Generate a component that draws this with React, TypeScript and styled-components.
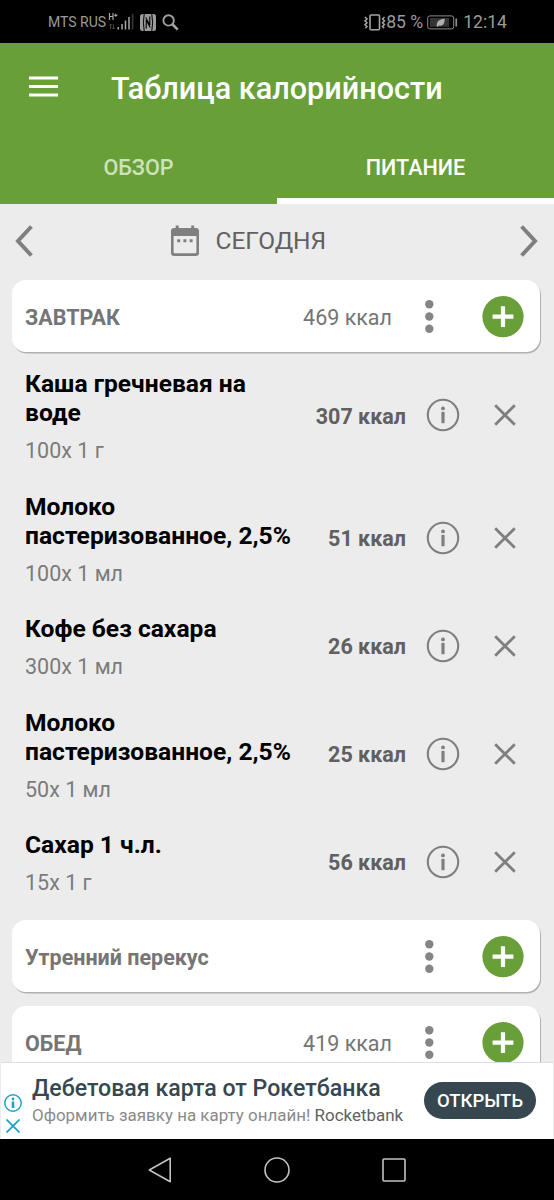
import React from 'react';
import styled, { createGlobalStyle } from 'styled-components';

const GREEN = '#689f38';
const GREY = '#7f7f7f';

const GlobalStyle = createGlobalStyle`
  * { box-sizing: border-box; }
  body { margin: 0; background: #ececec; font-family: Roboto, sans-serif; }
  svg { display: block; flex: none; }
  button { border: 0; padding: 0; background: none; font: inherit; color: inherit; }
`;

const Screen = styled.div`
  display: flex;
  flex-direction: column;
  width: 554px;
  height: 1200px;
  overflow: hidden;
  background: #ececec;
`;

const StatusBar = styled.div`
  flex: none;
  display: flex;
  justify-content: space-between;
  align-items: center;
  height: 43px;
  padding: 1px 47px 0 48px;
  background: #000;
  color: #9b9b9b;
`;

const StatusGroup = styled.div`
  display: flex;
  align-items: center;
`;

const StatusIcons = styled(StatusGroup)`
  gap: 6px;
`;

const Carrier = styled.span`
  width: 60px;
  font-size: 14px;
  line-height: 20px;
  white-space: nowrap;
`;

const StatusText = styled.span`
  font-size: 17.6px;
  line-height: 22px;
  white-space: nowrap;
`;

const BatterySlot = styled.span`
  margin: 0 5px 0 4px;
`;

const Header = styled.header`
  flex: none;
  height: 161px;
  background: ${GREEN};
  color: #fff;
`;

const TitleRow = styled.div`
  display: flex;
  align-items: center;
  gap: 53px;
  height: 88px;
  padding-left: 28px;
`;

const Title = styled.h1`
  margin: 0;
  padding-top: 3px;
  font-size: 30.6px;
  font-weight: 500;
  line-height: 36px;
  white-space: nowrap;
`;

const Tabs = styled.div`
  display: flex;
  height: 73px;
`;

const Tab = styled.button<{ $active?: boolean }>`
  flex: 1;
  padding-top: 5px;
  border-bottom: 6px solid ${(p) => (p.$active ? '#fff' : 'transparent')};
  color: ${(p) => (p.$active ? '#fff' : '#cfe3b8')};
  font-size: 21.6px;
  font-weight: 500;
`;

const DateBar = styled.div`
  flex: none;
  display: flex;
  align-items: center;
  justify-content: space-between;
  height: 76px;
  padding: 0 16px 3px 15px;
`;

const DateLabel = styled.div`
  flex: 1;
  display: flex;
  align-items: center;
  gap: 17px;
  padding-left: 137.5px;
  color: #616161;
  font-size: 24.5px;
`;

const Diary = styled.main`
  flex: 1;
  min-height: 0;
  overflow: hidden;
  padding: 0 14px 0 12px;
`;

const MealCard = styled.section`
  display: flex;
  align-items: center;
  height: 72px;
  margin-bottom: 14px;
  padding: 1px 16px 0 13px;
  border-radius: 14px;
  background: #fff;
  box-shadow: 1px 1.5px 0.5px #b0b0b0;
`;

const MealName = styled.h2`
  flex: 1;
  margin: 0;
  padding-top: 2px;
  color: #757575;
  font-size: 21.5px;
  font-weight: 700;
  line-height: 26px;
`;

const MealTotal = styled.span`
  margin-right: 32px;
  padding-top: 2px;
  color: #757575;
  font-size: 21.5px;
  line-height: 26px;
`;

const Dots = styled.button`
  display: flex;
  margin-right: 48px;
`;

const FoodList = styled.div`
  height: 554px;
`;

const BreakfastGroup = styled.div`
  ${MealCard} { margin-bottom: 1.8px; }
  ${FoodList} { margin-bottom: 12.6px; }
`;

const FoodRow = styled.div`
  display: flex;
  align-items: center;
  padding: 0 24px 0 13px;
`;

const FoodText = styled.div`
  flex: none;
  width: 280px;
  padding: 15.2px 0 12.1px;
`;

const FoodName = styled.h3`
  margin: 0 0 10px;
  color: #000;
  font-size: 24.6px;
  font-weight: 700;
  line-height: 29.5px;
  white-space: pre-line;
`;

const Portion = styled.div`
  color: #7b7b7b;
  font-size: 21.5px;
  line-height: 26.4px;
`;

const FoodKcal = styled.span`
  flex: 1;
  padding-top: 2px;
  color: #606060;
  font-size: 21.5px;
  font-weight: 700;
  text-align: right;
  white-space: nowrap;
`;

const InfoButton = styled.button`
  margin: 0 34px 0 20px;
`;

const AdBanner = styled.aside`
  flex: none;
  display: flex;
  height: 77px;
  margin: 0 1px;
  border-top: 1px solid #dcdfe1;
  background: #fff;
`;

const AdMarks = styled.div`
  display: flex;
  flex-direction: column;
  align-items: center;
  gap: 7px;
  width: 24px;
  padding-top: 31px;
`;

const AdCopy = styled.div`
  flex: 1;
  padding: 12px 0 0 7px;
  white-space: nowrap;
`;

const AdTitle = styled.div`
  color: #37474f;
  font-size: 23.15px;
  font-weight: 500;
  line-height: 28px;
`;

const AdText = styled.div`
  color: #8a8a8a;
  font-size: 16.95px;
  line-height: 24px;
`;

const AdBrand = styled.span`
  color: #616161;
`;

const AdButton = styled.button`
  flex: none;
  width: 112px;
  height: 37px;
  margin: 19px 17px 0 0;
  border-radius: 19px;
  background: #37474f;
  color: #fff;
  font-size: 18.5px;
  font-weight: 500;
`;

const NavBar = styled.nav`
  flex: none;
  display: flex;
  justify-content: center;
  align-items: center;
  gap: 92px;
  height: 61px;
  background: #000;
`;

const Signal = () => (
  <svg width="26" height="18" viewBox="0 0 26 18" fill="none">
    <path d="M1.5 0v7M5 0v7M1.5 3.5H5M6.3 2.3h3M7.8 .8v3" stroke="#a8a8a8" strokeWidth="1.2" />
    <path d="M2.6 16v-5M1.4 12.3l1.2-1.3 1.2 1.3M5.4 11v5M4.2 14.7l1.2 1.3 1.2-1.3" stroke="#505050" strokeWidth=".9" />
    <path d="M10.3 14v2.5M14 11v5.5M17.5 7.5v9M21 4v12.5" stroke="#a8a8a8" strokeWidth="1.5" />
    <path d="M24.6 1v15.5" stroke="#383838" strokeWidth="1.6" />
  </svg>
);

const NfcIcon = () => (
  <svg width="16" height="17" viewBox="0 0 16 17">
    <rect width="16" height="17" rx="2.5" fill="#9b9b9b" />
    <path d="M4.2 0Q2.6 8.5 4.2 17M11.8 0q1.6 8.5 0 17" fill="none" stroke="#000" strokeWidth="1" />
    <path d="M6.2 14.5V6l4 7.5M9.8 2.5V11l-4-7.5" fill="none" stroke="#000" strokeWidth="1.1" />
  </svg>
);

const SearchIcon = () => (
  <svg width="17" height="17" viewBox="0 0 17 17" fill="none" stroke="#a0a0a0">
    <circle cx="6.6" cy="6.4" r="5.2" strokeWidth="1.9" />
    <path d="M10.2 10l5.5 5.7" strokeWidth="2.6" />
  </svg>
);

const VibrateIcon = () => (
  <svg width="22" height="17" viewBox="0 0 22 17" fill="none" stroke="#a3a3a3" strokeWidth="1.5">
    <rect x="6" y="1" width="9.5" height="14.8" rx="1" strokeWidth="1.6" />
    <path d="M1 3l2 1.9-2 1.9 2 1.9-2 1.9 2 1.9-1.6 1.6M20.5 3l-2 1.9 2 1.9-2 1.9 2 1.9-2 1.9 1.6 1.6" />
  </svg>
);

const BatteryIcon = () => (
  <svg width="31" height="15" viewBox="0 0 31 15">
    <rect x=".7" y=".9" width="26" height="13" rx="2.2" fill="none" stroke="#8c8c8c" strokeWidth="1" />
    <rect x="3" y="3" width="19" height="8.8" fill="#343434" />
    <path d="M9.8 11.5c-.6-4.5 1.8-7.2 8-7.7-.3 5.2-2.2 7.8-6 6.7l-1.2 1.3z" fill="#b0b0b0" />
    <rect x="28.4" y="3.5" width="1.7" height="8" fill="#8c8c8c" />
  </svg>
);

const CalendarIcon = () => (
  <svg width="28" height="32" viewBox="0 0 28 32" fill={GREY}>
    <path fillRule="evenodd" d="M3 3h22a3 3 0 0 1 3 3v22a3 3 0 0 1-3 3H3a3 3 0 0 1-3-3V6a3 3 0 0 1 3-3zM2.6 11v16.2c0 .7.4 1.1 1.1 1.1h20.6c.7 0 1.1-.4 1.1-1.1V11z" />
    <path d="M4.7.4h3v4h-3zM20.2.4h3v4h-3zM6.2 14.2h3v3h-3zM12.4 14.2h3v3h-3zM18.6 14.2h3v3h-3z" />
  </svg>
);

const Chevron = ({ right }: { right?: boolean }) => (
  <svg width="18" height="32" viewBox="0 0 18 32" fill="none" stroke={GREY} strokeWidth="4">
    <path d={right ? 'M1.6 1.5L15 16 1.6 30.5' : 'M16.4 1.5L3 16l13.4 14.5'} />
  </svg>
);

const DotsIcon = () => (
  <svg width="10" height="34" viewBox="0 0 10 34" fill="#858585">
    <circle cx="5.3" cy="4.2" r="4.2" />
    <circle cx="5.3" cy="16.5" r="4.2" />
    <circle cx="5.3" cy="28.8" r="4.2" />
  </svg>
);

const AddIcon = () => (
  <svg width="42" height="42" viewBox="0 0 42 42">
    <circle cx="21" cy="20.6" r="20.6" fill={GREEN} />
    <path d="M10.6 20.6h20.8M21 10.2V31" stroke="#fff" strokeWidth="4.2" />
  </svg>
);

const InfoIcon = () => (
  <svg width="34" height="34" viewBox="0 0 34 34">
    <circle cx="17" cy="17" r="15.2" fill="none" stroke={GREY} strokeWidth="2.1" />
    <circle cx="17" cy="10.4" r="1.9" fill={GREY} />
    <rect x="15.4" y="13.9" width="3.2" height="11.3" fill={GREY} />
  </svg>
);

const RemoveIcon = () => (
  <svg width="22" height="22" viewBox="0 0 22 22" stroke={GREY} strokeWidth="2.8">
    <path d="M1.2 1.2l19.6 19.6M20.8 1.2L1.2 20.8" />
  </svg>
);

const Meal = ({ name, total }: { name: string; total?: string }) => (
  <MealCard>
    <MealName>{name}</MealName>
    {total && <MealTotal>{total}</MealTotal>}
    <Dots aria-label="Меню"><DotsIcon /></Dots>
    <button aria-label="Добавить"><AddIcon /></button>
  </MealCard>
);

const foods = [
  { name: 'Каша гречневая на\nводе', portion: '100x 1 г', kcal: '307 ккал' },
  { name: 'Молоко\nпастеризованное, 2,5%', portion: '100x 1 мл', kcal: '51 ккал' },
  { name: 'Кофе без сахара', portion: '300x 1 мл', kcal: '26 ккал' },
  { name: 'Молоко\nпастеризованное, 2,5%', portion: '50x 1 мл', kcal: '25 ккал' },
  { name: 'Сахар 1 ч.л.', portion: '15x 1 г', kcal: '56 ккал' },
];

export default function App() {
  return (
    <Screen>
      <GlobalStyle />
      <StatusBar>
        <StatusGroup>
          <Carrier>MTS RUS</Carrier>
          <StatusIcons>
            <Signal />
            <NfcIcon />
            <SearchIcon />
          </StatusIcons>
        </StatusGroup>
        <StatusGroup>
          <VibrateIcon />
          <StatusText>85 %</StatusText>
          <BatterySlot><BatteryIcon /></BatterySlot>
          <StatusText>12:14</StatusText>
        </StatusGroup>
      </StatusBar>

      <Header>
        <TitleRow>
          <svg width="30" height="22" viewBox="0 0 30 22" stroke="#fff" strokeWidth="3">
            <path d="M1 2h29M1 10.5h29M1 19h29" />
          </svg>
          <Title>Таблица калорийности</Title>
        </TitleRow>
        <Tabs>
          <Tab>ОБЗОР</Tab>
          <Tab $active>ПИТАНИЕ</Tab>
        </Tabs>
      </Header>

      <DateBar>
        <Chevron />
        <DateLabel>
          <CalendarIcon />
          СЕГОДНЯ
        </DateLabel>
        <Chevron right />
      </DateBar>

      <Diary>
        <BreakfastGroup>
          <Meal name="ЗАВТРАК" total="469 ккал" />
          <FoodList>
            {foods.map((food, index) => (
              <FoodRow key={index}>
                <FoodText>
                  <FoodName>{food.name}</FoodName>
                  <Portion>{food.portion}</Portion>
                </FoodText>
                <FoodKcal>{food.kcal}</FoodKcal>
                <InfoButton aria-label="Информация"><InfoIcon /></InfoButton>
                <button aria-label="Удалить"><RemoveIcon /></button>
              </FoodRow>
            ))}
          </FoodList>
        </BreakfastGroup>
        <Meal name="Утренний перекус" />
        <Meal name="ОБЕД" total="419 ккал" />
      </Diary>

      <AdBanner>
        <AdMarks>
          <svg width="18" height="18" viewBox="0 0 18 18">
            <circle cx="9" cy="9" r="8.2" fill="none" stroke="#1ba5c4" strokeWidth="1.5" />
            <circle cx="9" cy="5" r="1.4" fill="#1ba5c4" />
            <path d="M9 7.5V14" stroke="#1ba5c4" strokeWidth="2.6" />
          </svg>
          <svg width="14" height="14" viewBox="0 0 14 14" stroke="#1ba5c4" strokeWidth="1.8">
            <path d="M.5.5l13 13M13.5.5l-13 13" />
          </svg>
        </AdMarks>
        <AdCopy>
          <AdTitle>Дебетовая карта от Рокетбанка</AdTitle>
          <AdText>Оформить заявку на карту онлайн! <AdBrand>Rocketbank</AdBrand></AdText>
        </AdCopy>
        <AdButton>ОТКРЫТЬ</AdButton>
      </AdBanner>

      <NavBar>
        <svg width="24" height="26" viewBox="0 0 24 26" fill="none" stroke="#c2c2c2" strokeWidth="1.6" strokeLinejoin="round">
          <path d="M22.2 1.2v23.6L1.3 13z" />
        </svg>
        <svg width="26" height="26" viewBox="0 0 26 26" fill="none" stroke="#c2c2c2" strokeWidth="1.6">
          <circle cx="13" cy="13" r="12" />
        </svg>
        <svg width="24" height="24" viewBox="0 0 24 24" fill="none" stroke="#c2c2c2" strokeWidth="1.6">
          <rect x="1" y="1" width="22" height="22" rx="1" />
        </svg>
      </NavBar>
    </Screen>
  );
}
